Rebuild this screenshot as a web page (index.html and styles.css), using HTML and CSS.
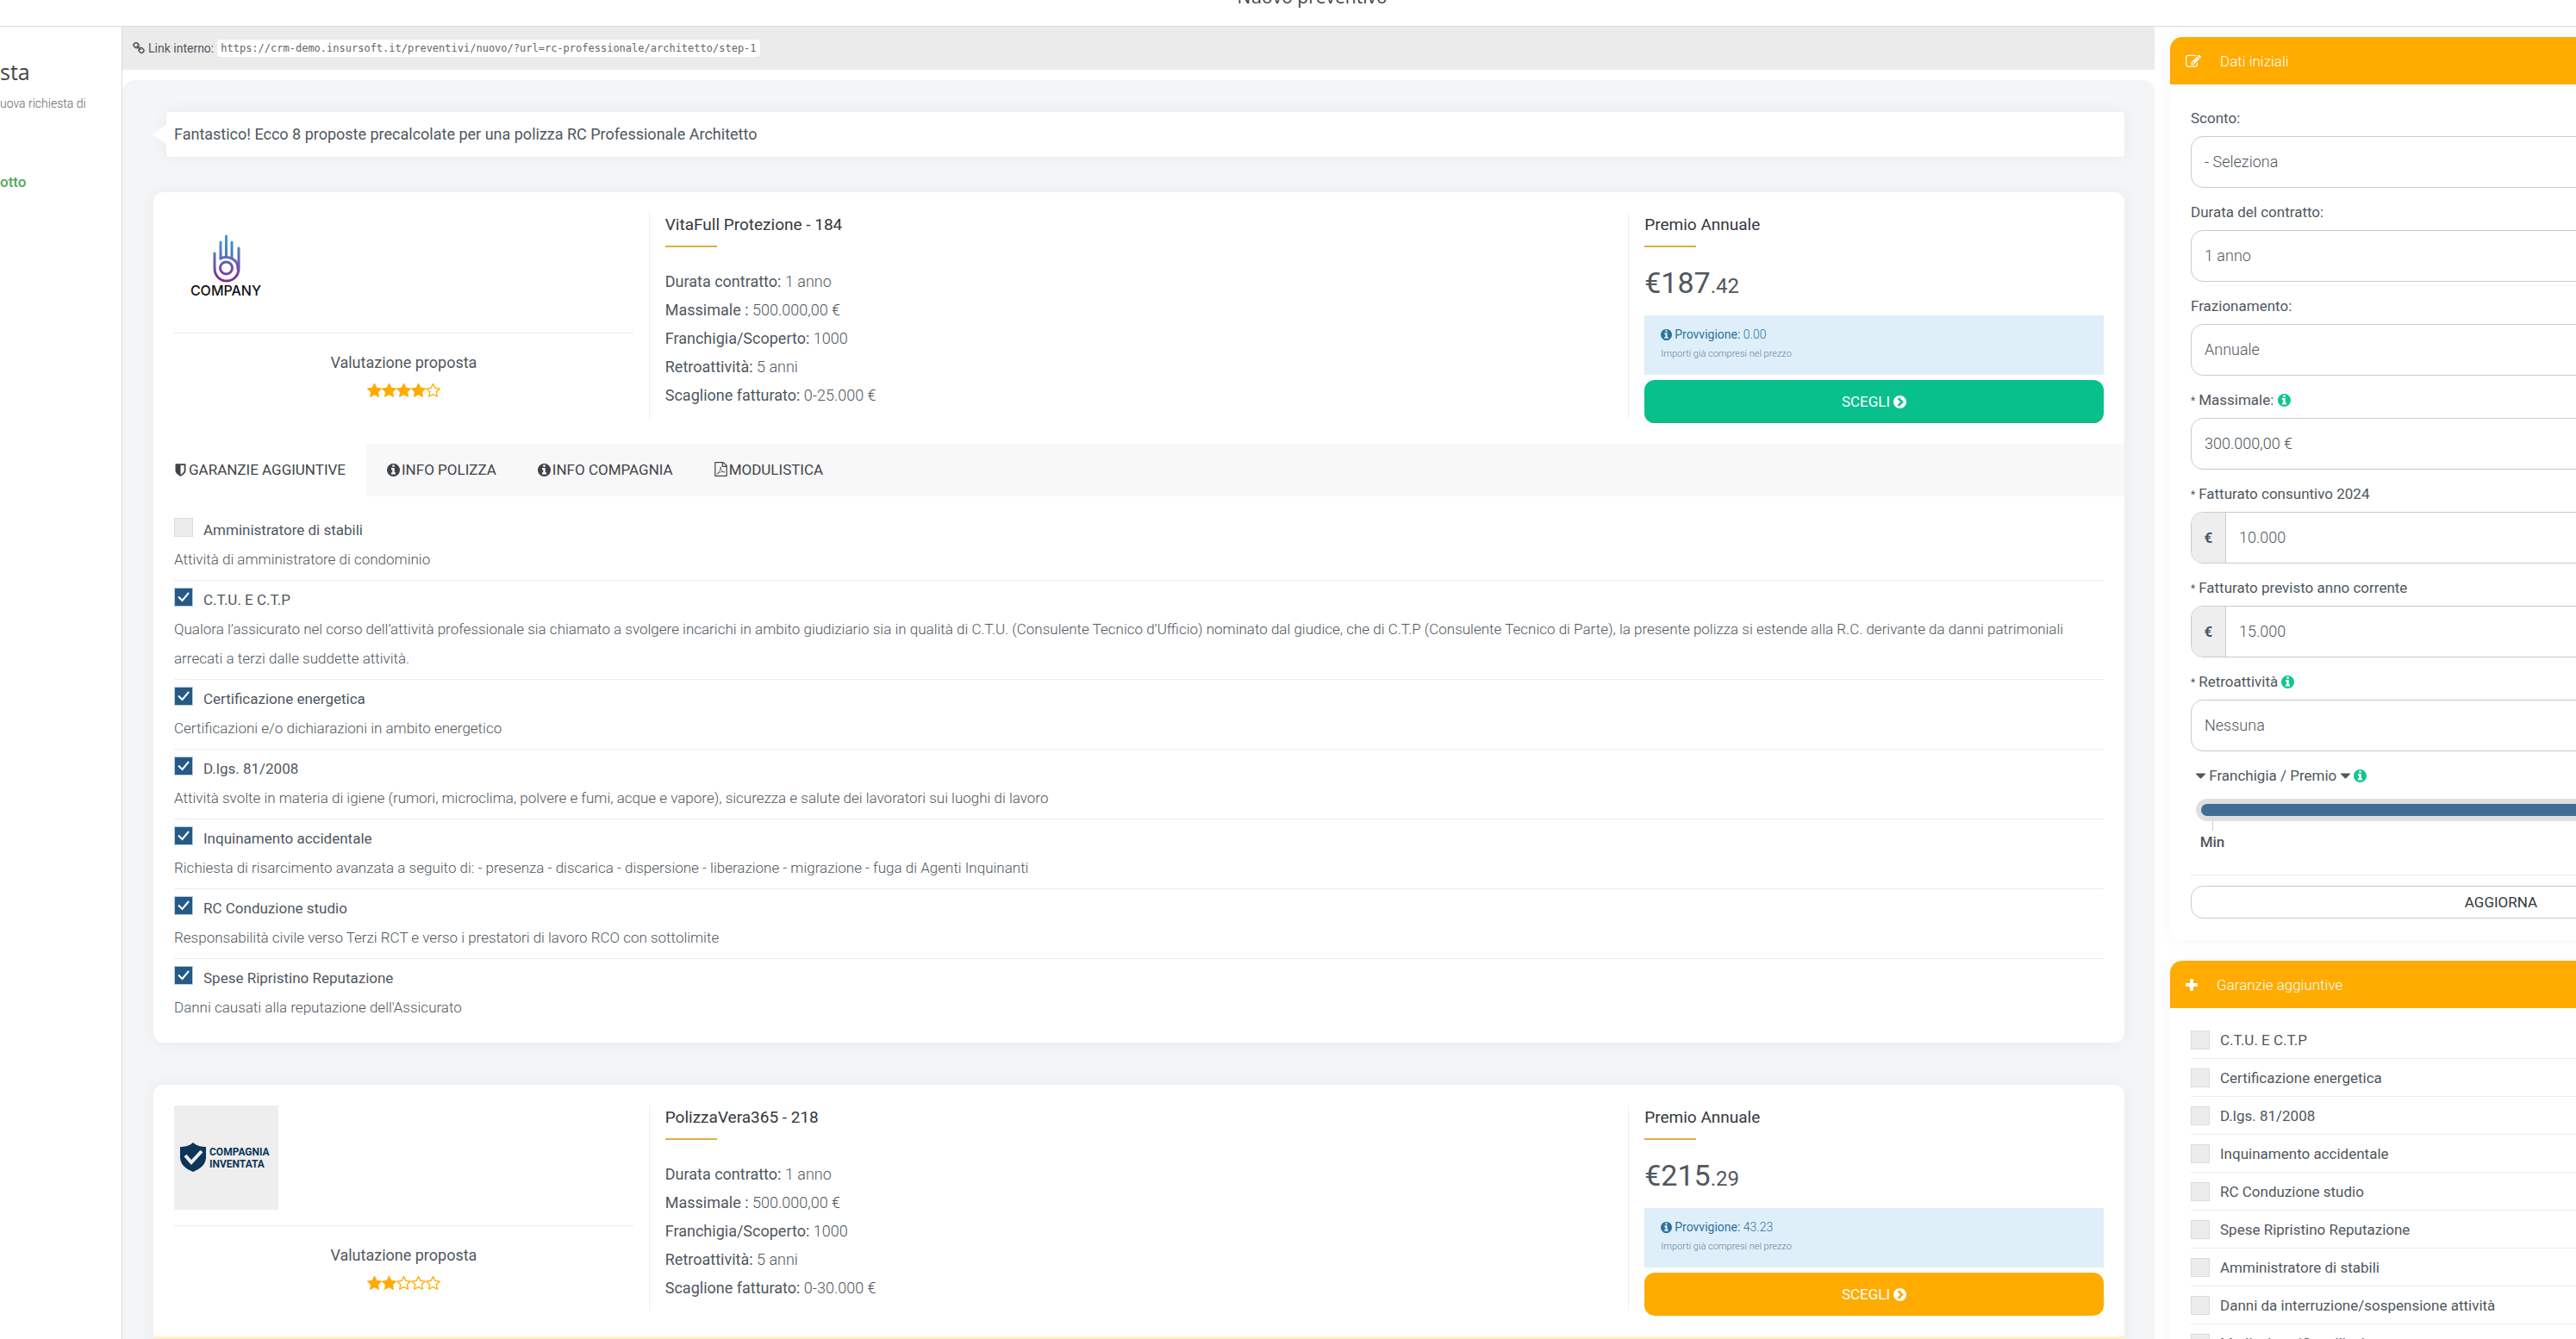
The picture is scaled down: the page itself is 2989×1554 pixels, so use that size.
FILE: index.html
```html
<!DOCTYPE html>
<html lang="it">
<head>
<meta charset="utf-8">
<title>Nuovo preventivo</title>
<link rel="stylesheet" href="styles.css">
</head>
<body>
<svg class="sprite" aria-hidden="true">
  <symbol id="i-info" viewBox="128 128 1536 1536"><path d="M1152 1376v-160q0-14-9-23t-23-9h-96v-512q0-14-9-23t-23-9h-320q-14 0-23 9t-9 23v160q0 14 9 23t23 9h96v320h-96q-14 0-23 9t-9 23v160q0 14 9 23t23 9h448q14 0 23-9t9-23zm-128-896v-160q0-14-9-23t-23-9h-192q-14 0-23 9t-9 23v160q0 14 9 23t23 9h192q14 0 23-9t9-23zm640 416q0 209-103 385.5t-279.5 279.5-385.5 103-385.5-103-279.5-279.5-103-385.5 103-385.5 279.5-279.5 385.5-103 385.5 103 279.5 279.5 103 385.5z"/></symbol>
  <symbol id="i-star" viewBox="64 64 1664 1664"><path d="M1728 647q0 22-26 48l-363 354 86 500q1 7 1 20 0 21-10.500 35.500t-30.500 14.500q-19 0-40-12l-449-236-449 236q-22 12-40 12-21 0-31.500-14.500t-10.500-35.500q0-6 2-20l86-500-364-354q-25-27-25-48 0-37 56-46l502-73 225-455q19-41 49-41t49 41l225 455 502 73q56 9 56 46z"/></symbol>
  <symbol id="i-star-o" viewBox="64 64 1664 1664"><path d="M1201 1004l306-297-422-62-189-382-189 382-422 62 306 297-73 421 378-199 377 199zm527-357q0 22-26 48l-363 354 86 500q1 7 1 20 0 50-41 50-19 0-40-12l-449-236-449 236q-22 12-40 12-21 0-31.500-14.500t-10.500-35.500q0-6 2-20l86-500-364-354q-25-27-25-48 0-37 56-46l502-73 225-455q19-41 49-41t49 41l225 455 502 73q56 9 56 46z"/></symbol>
  <symbol id="i-shield" viewBox="128 96 1536 1600"><path d="M1344 960v-640h-448v1137q119-63 213-137 235-184 235-360zm192-768v768q0 86-33.500 170.500t-83 150-118 127.500-126.500 103-121 77.500-89.500 49.500-42.500 20q-12 6-26 6t-26-6q-16-7-42.500-20t-89.500-49.500-121-77.500-126.500-103-118-127.500-83-150-33.500-170.500v-768q0-26 19-45t45-19h1152q26 0 45 19t19 45z"/></symbol>
  <symbol id="i-chevron" viewBox="128 128 1536 1536"><path d="M845 1395l454-454q19-19 19-45t-19-45l-454-454q-19-19-45-19t-45 19l-102 102q-19 19-19 45t19 45l307 307-307 307q-19 19-19 45t19 45l102 102q19 19 45 19t45-19zm819-499q0 209-103 385.500t-279.500 279.500-385.500 103-385.500-103-279.500-279.500-103-385.500 103-385.500 279.500-279.500 385.500-103 385.500 103 279.500 279.500 103 385.500z"/></symbol>
  <symbol id="i-plus" viewBox="192 128 1408 1408"><path d="M1600 736v192q0 40-28 68t-68 28h-416v416q0 40-28 68t-68 28h-192q-40 0-68-28t-28-68v-416h-416q-40 0-68-28t-28-68v-192q0-40 28-68t68-28h416v-416q0-40 28-68t68-28h192q40 0 68 28t28 68v416h416q40 0 68 28t28 68z"/></symbol>
  <symbol id="i-edit" viewBox="0 64 1792 1600"><path d="M888 1184l116-116-152-152-116 116v56h96v96h56zm440-720q-16-16-33 1l-350 350q-17 17-1 33t33-1l350-350q17-17 1-33zm80 594v190q0 119-84.500 203.500t-203.500 84.500h-832q-119 0-203.500-84.500t-84.500-203.500v-832q0-119 84.500-203.500t203.500-84.500h832q63 0 117 25 15 7 18 23 3 17-9 29l-49 49q-14 14-32 8-23-6-45-6h-832q-66 0-113 47t-47 113v832q0 66 47 113t113 47h832q66 0 113-47t47-113v-126q0-13 9-22l64-64q15-15 35-7t20 29zm-96-738l288 288-672 672h-288v-288zm444 132l-92 92-288-288 92-92q28-28 68-28t68 28l152 152q28 28 28 68t-28 68z"/></symbol>
  <symbol id="i-pdf" viewBox="128 0 1536 1792"><path d="M1596 380q28 28 48 76t20 88v1152q0 40-28 68t-68 28h-1344q-40 0-68-28t-28-68v-1600q0-40 28-68t68-28h896q40 0 88 20t76 48zm-444-244v376h376q-10-29-22-41l-313-313q-12-12-41-22zm384 1528v-1024h-416q-40 0-68-28t-28-68v-416h-768v1536h1280z"/><path d="M500 1480q-90 20-70-40 60-90 210-160 120-200 210-460-60-170-10-210 70-20 60 110-10 60-30 110 70 240 240 370 240-30 260 50-40 80-250-40-230 20-460 100-110 160-160 170z" fill="none" stroke="currentColor" stroke-width="75"/></symbol>
  <symbol id="i-link" viewBox="64 64 1664 1664"><path d="M1520 1216q0-40-28-68l-208-208q-28-28-68-28-42 0-72 32 3 3 19 18.500t21.500 21.500 15 19 13 25.500 3.500 27.500q0 40-28 68t-68 28q-15 0-27.500-3.500t-25.500-13-19-15-21.500-21.500-18.500-19q-33 31-33 73 0 40 28 68l206 207q27 27 68 27 40 0 68-26l147-146q28-28 28-67zm-703-705q0-40-28-68l-206-207q-28-28-68-28-39 0-68 27l-147 146q-28 28-28 67 0 40 28 68l208 208q27 27 68 27 42 0 72-31-3-3-19-18.500t-21.500-21.500-15-19-13-25.500-3.500-27.500q0-40 28-68t68-28q15 0 27.500 3.500t25.500 13 19 15 21.500 21.500 18.500 19q33-31 33-73zm895 705q0 120-85 203l-147 146q-83 83-203 83-121 0-204-85l-206-207q-83-83-83-203 0-123 88-209l-88-88q-86 88-208 88-120 0-204-84l-208-208q-84-84-84-204t85-203l147-146q83-83 203-83 121 0 204 85l206 207q83 83 83 203 0 123-88 209l88 88q86-88 208-88 120 0 204 84l208 208q84 84 84 204z"/></symbol>
  <symbol id="i-caret" viewBox="384 640 1024 576"><path d="M1408 704q0 26-19 45l-448 448q-19 19-45 19t-45-19l-448-448q-19-19-19-45t19-45 45-19h896q26 0 45 19t19 45z"/></symbol>
</svg>

<header class="topbar"><h1>Nuovo preventivo</h1></header>

<div class="shell">
  <aside class="steps">
    <h2>sta</h2>
    <p>uova richiesta di</p>
    <a href="#prodotto">otto</a>
  </aside>

  <main class="main">
    <div class="linkbar">
      <svg class="icon i14"><use href="#i-link"/></svg>
      <span>Link interno:</span>
      <code>https://crm-demo.insursoft.it/preventivi/nuovo/?url=rc-professionale/architetto/step-1</code>
    </div>

    <div class="results">
      <p class="bubble">Fantastico! Ecco 8 proposte precalcolate per una polizza RC Professionale Architetto</p>

      <article class="card">
        <div class="offer">
          <div class="brand">
            <svg class="logo" viewBox="0 0 121 121" role="img" aria-label="Company">
              <defs><linearGradient id="hand" gradientUnits="userSpaceOnUse" x1="0" y1="25" x2="0" y2="80"><stop offset="0" stop-color="#35a3dc"/><stop offset=".5" stop-color="#5b6cba"/><stop offset="1" stop-color="#84298a"/></linearGradient></defs>
              <g fill="none" stroke="url(#hand)" stroke-width="3" stroke-linecap="round">
                <path d="M47 47V64C47 84 75 84 75 64V41"/>
                <path d="M54 34V53M60.500 27V50M67 34V52"/>
                <path d="M54 53C57 50 75 50 74 66"/>
                <circle cx="60.500" cy="64" r="7"/>
              </g>
              <text class="logo-company" x="60" y="96" text-anchor="middle">COMPANY</text>
            </svg>
            <hr>
            <p>Valutazione proposta</p>
            <div class="stars" role="img" aria-label="4 su 5">
              <svg><use href="#i-star"/></svg><svg><use href="#i-star"/></svg><svg><use href="#i-star"/></svg><svg><use href="#i-star"/></svg><svg><use href="#i-star-o"/></svg>
            </div>
          </div>
          <div class="details">
            <h3>VitaFull Protezione - 184</h3>
            <ul>
              <li>Durata contratto: <span>1 anno</span></li>
              <li>Massimale : <span>500.000,00 €</span></li>
              <li>Franchigia/Scoperto: <span>1000</span></li>
              <li>Retroattività: <span>5 anni</span></li>
              <li>Scaglione fatturato: <span>0-25.000 €</span></li>
            </ul>
          </div>
          <div class="premium">
            <h3>Premio Annuale</h3>
            <p class="price">€187<small>.42</small></p>
            <div class="fee">
              <p><svg class="icon i12"><use href="#i-info"/></svg>Provvigione: <span>0.00</span></p>
              <small>Importi già compresi nel prezzo</small>
            </div>
            <button class="choose green" type="button">SCEGLI <svg class="icon i15"><use href="#i-chevron"/></svg></button>
          </div>
        </div>

        <nav class="tabs">
          <a class="active" href="#garanzie"><svg class="icon i15"><use href="#i-shield"/></svg>GARANZIE AGGIUNTIVE</a>
          <a href="#polizza"><svg class="icon i15"><use href="#i-info"/></svg>INFO POLIZZA</a>
          <a href="#compagnia"><svg class="icon i15"><use href="#i-info"/></svg>INFO COMPAGNIA</a>
          <a href="#modulistica"><svg class="icon pdf"><use href="#i-pdf"/></svg>MODULISTICA</a>
        </nav>

        <ul class="covers">
          <li><label><input type="checkbox">Amministratore di stabili</label><p>Attività di amministratore di condominio</p></li>
          <li><label><input type="checkbox" checked>C.T.U. E C.T.P</label><p>Qualora l’assicurato nel corso dell’attività professionale sia chiamato a svolgere incarichi in ambito giudiziario sia in qualità di C.T.U. (Consulente Tecnico d’Ufficio) nominato dal giudice, che di C.T.P (Consulente Tecnico di Parte), la presente polizza si estende alla R.C. derivante da danni patrimoniali arrecati a terzi dalle suddette attività.</p></li>
          <li><label><input type="checkbox" checked>Certificazione energetica</label><p>Certificazioni e/o dichiarazioni in ambito energetico</p></li>
          <li><label><input type="checkbox" checked>D.lgs. 81/2008</label><p>Attività svolte in materia di igiene (rumori, microclima, polvere e fumi, acque e vapore), sicurezza e salute dei lavoratori sui luoghi di lavoro</p></li>
          <li><label><input type="checkbox" checked>Inquinamento accidentale</label><p>Richiesta di risarcimento avanzata a seguito di: - presenza - discarica - dispersione - liberazione - migrazione - fuga di Agenti Inquinanti</p></li>
          <li><label><input type="checkbox" checked>RC Conduzione studio</label><p>Responsabilità civile verso Terzi RCT e verso i prestatori di lavoro RCO con sottolimite</p></li>
          <li><label><input type="checkbox" checked>Spese Ripristino Reputazione</label><p>Danni causati alla reputazione dell'Assicurato</p></li>
        </ul>
      </article>

      <article class="card">
        <div class="offer">
          <div class="brand">
            <svg class="logo" viewBox="0 0 121 121" role="img" aria-label="Compagnia Inventata">
              <rect width="121" height="121" fill="#eee"/>
              <path d="M22 43C18 47 12 48 7 48V61C8 70 15 74 22 77C29 74 36 70 37 61V48C32 48 26 47 22 43Z" fill="#0c3558"/>
              <path d="M13 58L20 66L32 53" fill="none" stroke="#eee" stroke-width="4"/>
              <text class="logo-inventata" x="41" y="58">COMPAGNIA</text>
              <text class="logo-inventata" x="41" y="72">INVENTATA</text>
            </svg>
            <hr>
            <p>Valutazione proposta</p>
            <div class="stars" role="img" aria-label="2 su 5">
              <svg><use href="#i-star"/></svg><svg><use href="#i-star"/></svg><svg><use href="#i-star-o"/></svg><svg><use href="#i-star-o"/></svg><svg><use href="#i-star-o"/></svg>
            </div>
          </div>
          <div class="details">
            <h3>PolizzaVera365 - 218</h3>
            <ul>
              <li>Durata contratto: <span>1 anno</span></li>
              <li>Massimale : <span>500.000,00 €</span></li>
              <li>Franchigia/Scoperto: <span>1000</span></li>
              <li>Retroattività: <span>5 anni</span></li>
              <li>Scaglione fatturato: <span>0-30.000 €</span></li>
            </ul>
          </div>
          <div class="premium">
            <h3>Premio Annuale</h3>
            <p class="price">€215<small>.29</small></p>
            <div class="fee">
              <p><svg class="icon i12"><use href="#i-info"/></svg>Provvigione: <span>43.23</span></p>
              <small>Importi già compresi nel prezzo</small>
            </div>
            <button class="choose" type="button">SCEGLI <svg class="icon i15"><use href="#i-chevron"/></svg></button>
          </div>
        </div>
        <div class="notice"></div>
      </article>
    </div>
  </main>

  <aside class="filters">
    <section class="panel">
      <h2><svg class="icon i18"><use href="#i-edit"/></svg>Dati iniziali</h2>
      <form class="panel-body">
        <div class="field"><label for="sconto">Sconto:</label><select id="sconto"><option>- Seleziona</option></select></div>
        <div class="field"><label for="durata">Durata del contratto:</label><select id="durata"><option>1 anno</option></select></div>
        <div class="field"><label for="fraz">Frazionamento:</label><select id="fraz"><option>Annuale</option></select></div>
        <div class="field"><label for="mass"><small>*</small>Massimale: <svg class="icon i15 hint"><use href="#i-info"/></svg></label><select id="mass"><option>300.000,00 €</option></select></div>
        <div class="field"><label for="f24"><small>*</small>Fatturato consuntivo 2024</label><div class="group"><span>€</span><input id="f24" type="text" value="10.000"></div></div>
        <div class="field"><label for="f25"><small>*</small>Fatturato previsto anno corrente</label><div class="group"><span>€</span><input id="f25" type="text" value="15.000"></div></div>
        <div class="field"><label for="retro"><small>*</small>Retroattività <svg class="icon i15 hint"><use href="#i-info"/></svg></label><select id="retro"><option>Nessuna</option></select></div>
        <div class="slider">
          <label for="franchigia"><svg class="icon caret"><use href="#i-caret"/></svg> Franchigia / Premio <svg class="icon caret"><use href="#i-caret"/></svg> <svg class="icon i15 hint"><use href="#i-info"/></svg></label>
          <input id="franchigia" type="range" min="0" max="100" value="100">
          <div class="tick">Min</div>
        </div>
        <button class="update" type="button">AGGIORNA</button>
      </form>
    </section>

    <section class="panel">
      <h2><svg class="icon i14"><use href="#i-plus"/></svg>Garanzie aggiuntive</h2>
      <ul class="options">
        <li><label><input type="checkbox">C.T.U. E C.T.P</label></li>
        <li><label><input type="checkbox">Certificazione energetica</label></li>
        <li><label><input type="checkbox">D.lgs. 81/2008</label></li>
        <li><label><input type="checkbox">Inquinamento accidentale</label></li>
        <li><label><input type="checkbox">RC Conduzione studio</label></li>
        <li><label><input type="checkbox">Spese Ripristino Reputazione</label></li>
        <li><label><input type="checkbox">Amministratore di stabili</label></li>
        <li><label><input type="checkbox">Danni da interruzione/sospensione attività</label></li>
        <li><label><input type="checkbox">Mediazione/Conciliazione</label></li>
      </ul>
    </section>
  </aside>
</div>
</body>
</html>
```
FILE: styles.css
```css
* { box-sizing: border-box; }

html, body { height: 100%; }

body {
  margin: 0;
  display: flex;
  flex-direction: column;
  overflow: hidden;
  background: #fff;
  color: #4f575e;
  font: 400 17px/26px Roboto, sans-serif;
}

h1, h2, h3, p, ul { margin: 0; padding: 0; font-weight: 400; }
ul { list-style: none; }
a { color: inherit; text-decoration: none; }
button, input, select { font: inherit; color: inherit; }
hr { margin: 0; border: 0; border-top: 1px solid #e9ebec; }

.sprite { display: none; }
.icon { flex: none; fill: currentColor; vertical-align: -2px; }
.i12 { width: 13px; height: 13px; }
.i14 { width: 14px; height: 14px; }
.i15 { width: 15px; height: 15px; }
.i18 { width: 18px; height: 16px; }
.pdf { width: 15px; height: 17px; }
.hint { color: #12c592; }

/* top bar */
.topbar {
  flex: none;
  display: flex;
  justify-content: center;
  align-items: flex-end;
  height: 31px;
  padding: 0 0 20px 56px;
  border-bottom: 1px solid #d9dcde;
}
.topbar h1 { font: 400 21px/28px "Open Sans", sans-serif; color: #444; }

.shell {
  flex: 1;
  min-height: 0;
  display: grid;
  grid-template-columns: 142px minmax(0, 1fr) 489px;
}

/* left column */
.steps { padding-top: 34px; border-right: 1px solid #d9dcde; white-space: nowrap; overflow: hidden; }
.steps h2 { font: 400 25px/36px "Open Sans", sans-serif; color: #444; }
.steps p { margin-top: 6px; font-size: 14px; font-weight: 300; color: #666; }
.steps a { display: block; margin-top: 65px; font-weight: 500; color: #55a659; }

/* link bar */
.main { display: flex; flex-direction: column; min-height: 0; overflow: hidden; }
.linkbar {
  flex: none;
  display: flex;
  align-items: center;
  gap: 4px;
  height: 50px;
  padding-left: 12px;
  background: #ebebeb;
  font-size: 14px;
}
.linkbar code {
  padding: 0 4px;
  border-radius: 4px;
  background: #fff;
  color: #666;
  font: 12px/20px "DejaVu Sans Mono", monospace;
}

.results {
  flex: 1;
  min-height: 0;
  overflow: hidden;
  margin-top: 12px;
  padding: 37px 35px 0 36px;
  border-radius: 14px 14px 0 0;
  background: #f4f5f7;
}

.bubble {
  position: relative;
  margin: 0 0 41px 15px;
  padding: 0 9px;
  border-radius: 4px;
  background: #fff;
  box-shadow: 0 0 20px rgba(0, 0, 0, .05);
  font-size: 18px;
  line-height: 52px;
}
.bubble::before {
  content: "";
  position: absolute;
  left: -16px;
  top: 15px;
  border: 11px solid transparent;
  border-right: 16px solid #fff;
  border-left: 0;
}

/* offer cards */
.card {
  margin-bottom: 49px;
  border-radius: 12px;
  background: #fff;
  box-shadow: 0 0 20px rgba(0, 0, 0, .05);
  overflow: hidden;
}
.offer { display: grid; grid-template-columns: 1fr 2fr 1fr; padding: 24px 6px; }
.brand { padding: 0 18px; text-align: center; font-size: 18px; }
.brand hr { margin: 18px 0 21px; }
.logo { display: block; width: 121px; height: 121px; }
.logo-company { font: 500 16px Inter, sans-serif; fill: #111; }
.logo-inventata { font: 700 12px Roboto, sans-serif; fill: #0c3558; }
.stars { display: flex; justify-content: center; margin-top: 11px; }
.stars svg { width: 17px; height: 17px; fill: #ffab00; }

.details { margin-bottom: 6px; padding: 0 18px; border: solid #edeff0; border-width: 0 1px; }
.card h3 { font-size: 19px; line-height: 27px; color: #33383c; }
.card h3::after { content: ""; display: block; width: 60px; height: 2px; margin-top: 11px; background: #ddb13c; }
.details ul { margin-top: 23px; font-size: 18px; line-height: 33px; }
.details span { font-weight: 300; }

.premium { padding: 0 18px; }
.price { margin-top: 21px; font-size: 34px; line-height: 40px; }
.price small { font-size: 24px; }
.fee { margin: 14px 0 6px; padding: 9px 19px; height: 69px; background: #dfeff9; color: #2b719f; font-size: 14px; }
.fee p { line-height: 26px; }
.fee p span { font-weight: 300; }
.fee .icon { margin-right: 3px; }
.fee small { display: block; font-size: 11px; font-weight: 300; line-height: 20px; color: #64829a; }
.choose {
  display: block;
  width: 100%;
  height: 50px;
  border: 0;
  border-radius: 12px;
  background: #ffab00;
  color: #fff;
}
.choose.green { background: #08c08b; box-shadow: inset 0 -1px #2ba27f; }

.tabs { display: flex; background: #f8f8f8; color: #3f4448; }
.tabs a { padding: 0 24px; line-height: 61px; }
.tabs .icon { margin-right: 2px; }
.tabs .active { background: #fff; }

.covers { padding: 17px 24px; }
.covers li { padding: 6px 0 7px; border-bottom: 1px solid #ebedee; }
.covers li:last-child { border-bottom: 0; }
.covers label { display: flex; line-height: 33px; }
.covers p { font-weight: 300; line-height: 34px; }

input[type="checkbox"] {
  appearance: none;
  flex: none;
  width: 22px;
  height: 22px;
  margin: 2px 12px 0 0;
  border: 1px solid #dcdcdc;
  background: #ececec;
}
input[type="checkbox"]:checked {
  border-color: #b9d0e4;
  background: #265a86 url("data:image/svg+xml,%3Csvg xmlns='http://www.w3.org/2000/svg' viewBox='0 0 20 20'%3E%3Cpath d='M4 9.500L8.500 14L16 5' fill='none' stroke='white' stroke-width='2'/%3E%3C/svg%3E");
}
.notice { height: 60px; background: #fff0cc; }

/* right column */
.filters { padding: 12px 0 0 18px; overflow: hidden; }
.panel {
  width: 768px;
  margin-bottom: 24px;
  border-radius: 14px;
  background: #fff;
  box-shadow: 0 0 20px rgba(0, 0, 0, .04);
}
.panel h2 {
  display: flex;
  align-items: center;
  gap: 22px;
  height: 55px;
  padding-left: 18px;
  border-radius: 14px 14px 0 0;
  background: #ffab00;
  color: #fff;
  font-size: 17px;
  font-weight: 300;
}
.panel-body { padding: 26px 24px 25px; }
.field { margin-bottom: 15px; }
.field label { display: block; height: 26px; margin-bottom: 8px; }
.field label small { margin-right: 4px; font-size: 12px; vertical-align: 1px; }
.field select, .group {
  display: block;
  width: 100%;
  height: 60px;
  border: 1px solid #c8cbcd;
  border-radius: 14px;
  background: #fff;
}
.field select { appearance: none; padding: 0 15px; font-size: 18px; font-weight: 300; }
.group { display: flex; overflow: hidden; }
.group span {
  width: 40px;
  border-right: 1px solid #c8cbcd;
  background: #eee;
  font-weight: 700;
  line-height: 58px;
  text-align: center;
}
.group input { flex: 1; min-width: 0; padding: 0 15px; border: 0; background: none; font-size: 18px; font-weight: 300; }

.slider { padding: 0 6px 25px; border-bottom: 1px solid #e9ebec; }
.slider label { display: block; }
.caret { width: 11px; height: 7px; vertical-align: 2px; }
.slider input {
  appearance: none;
  display: block;
  width: 100%;
  height: 26px;
  margin: 14px 0 0;
  border: 6px solid #dedfe0;
  border-radius: 13px;
  background: #3f6d93;
}
.slider input::-webkit-slider-thumb { appearance: none; width: 14px; height: 14px; }
.tick { width: 38px; font-weight: 500; line-height: 26px; text-align: center; }
.tick::before { content: ""; display: block; width: 1px; height: 11px; margin: 0 auto; background: #c8cbcd; }
.update {
  display: block;
  width: 100%;
  height: 38px;
  margin-top: 12px;
  border: 1px solid #c8cbcd;
  border-radius: 14px;
  background: #fff;
  color: #33383c;
}

.options { padding: 15px 24px; }
.options li { border-bottom: 1px solid #ebedee; }
.options label { display: flex; align-items: center; height: 43px; }
.options input { margin-top: 0; }
```
